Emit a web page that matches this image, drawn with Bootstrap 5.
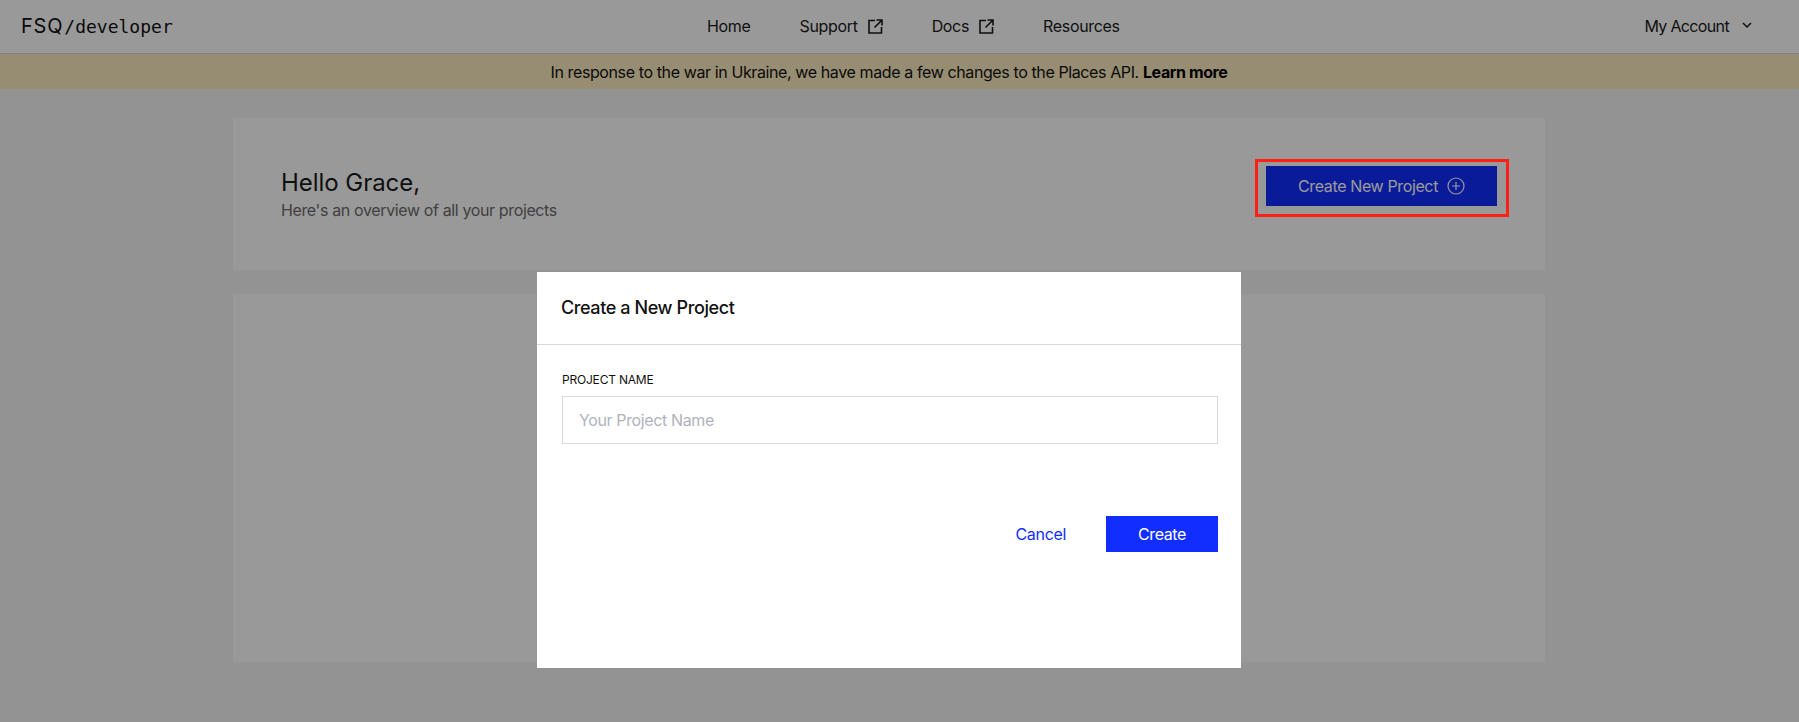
<!doctype html>
<html lang="en"><head><meta charset="utf-8"><title>FSQ developer</title>
<link href="https://cdn.jsdelivr.net/npm/bootstrap@5.3.0/dist/css/bootstrap.min.css" rel="stylesheet">
<style>
html,body{height:100%}
body{font-family:Inter,"Liberation Sans",sans-serif;background:#f5f5f5;color:#1a1a1a;font-size:16px;letter-spacing:-.33px;overflow:hidden}
.topbar{height:54px;background:#fff;border-bottom:1px solid #d9d9d9;padding:0 47px 2px 21px}
.brandslot{width:686px;flex:none}
.brand{font-family:"DejaVu Sans Mono",monospace;font-size:18px;color:#111;letter-spacing:0;text-decoration:none;display:flex;align-items:baseline}
.brand b{font-family:Inter,sans-serif;font-weight:400;font-size:20px;letter-spacing:.8px;margin-right:1px}
.mainnav{gap:49px}
.mainnav a,.acct{color:#1a1a1a;text-decoration:none;font-size:16px}
.mainnav svg{margin-left:10px;vertical-align:-2px}
.acct{gap:13px;margin-left:auto;letter-spacing:-.65px}
.notice{height:35px;background:#fbebc0;color:#111;font-size:16px;padding-right:21px;letter-spacing:-.39px}
.notice a{color:#000;font-weight:700;text-decoration:none}
.pagecol{padding-right:21px}
.pagewrap{width:1312px;margin:29px auto 0}
.panel-top{height:152px;background:#fff;padding:48px 48px 0}
.panel-low{height:368px;background:#fff;margin-top:24px}
.hello{font-size:24px;line-height:34px;letter-spacing:-.05px;margin:0}
.subhello{font-size:16px;color:#6c6c6c;line-height:20px;letter-spacing:-.37px}
.markbox{position:relative}
.markbox::after{content:"";position:absolute;top:-7px;left:-11px;right:-12px;bottom:-11px;border:3px solid #ff1f14;z-index:1060;pointer-events:none}
.btn-fsq{background:#112eff;color:#fff;border:0;border-radius:0;font-size:16px;letter-spacing:-.37px;height:40px;width:231px;padding:0;display:flex;align-items:center;justify-content:center;gap:9px}
.btn-fsq:hover{background:#112eff;color:#fff}
.veil.modal-backdrop{--bs-backdrop-opacity:.4}
.modal.modalroom{padding-right:21px}
.sheet{max-width:704px;width:704px;margin:272px auto 0}
.sheet .modal-content{border:0;border-radius:0;height:396px}
.sheet .modal-header{height:73px;padding:0 24px 2px;border-bottom:1px solid #d9d9d9;border-radius:0}
.sheet .modal-title{font-size:18px;font-weight:500;color:#111;letter-spacing:-.4px}
.sheet .modal-body{padding:27px 23px 0 25px;flex:none}
.fieldlabel{font-size:12px;line-height:16px;color:#111;margin:0 0 8px;display:block;letter-spacing:-.2px}
.sheet .form-control{height:48px;border:1px solid #d9d9d9;border-radius:0;font-size:16px;padding:0 16px;letter-spacing:-.37px}
.sheet .form-control::placeholder{color:#b0b3bd}
.actionrow{margin-top:72px;gap:40px}
.canceltxt{color:#112eff;text-decoration:none}
.btn-make{width:112px;height:36px}
</style></head>
<body>
<nav class="topbar d-flex align-items-center">
  <div class="brandslot"><a class="brand" href="#"><b>FSQ</b>/developer</a></div>
  <div class="mainnav d-flex align-items-center">
    <a href="#">Home</a>
    <a href="#">Support<svg width="15" height="15" viewBox="0 0 15 15" fill="none" stroke="#1a1a1a" stroke-width="1.6"><path d="M7 1.500H1v12.500h12.500V8M8.500 1H14v5.500M14 1 6.500 8.500"/></svg></a>
    <a href="#">Docs<svg width="15" height="15" viewBox="0 0 15 15" fill="none" stroke="#1a1a1a" stroke-width="1.6"><path d="M7 1.500H1v12.500h12.500V8M8.500 1H14v5.500M14 1 6.500 8.500"/></svg></a>
    <a href="#">Resources</a>
  </div>
  <span class="acct d-flex align-items-center">My Account<svg width="10" height="7" viewBox="0 0 10 7" fill="none" stroke="#1a1a1a" stroke-width="1.5"><path d="M1 1l4 4 4-4"/></svg></span>
</nav>
<div class="notice d-flex align-items-center justify-content-center"><span>In response to the war in Ukraine, we have made a few changes to the Places API. <a href="#">Learn more</a></span></div>
<div class="pagecol">
<main class="pagewrap">
  <section class="panel-top d-flex align-items-start justify-content-between">
    <div><h1 class="hello fw-normal">Hello Grace,</h1><div class="subhello">Here's an overview of all your projects</div></div>
    <div class="markbox"><button class="btn btn-fsq" type="button">Create New Project<svg width="18" height="18" viewBox="0 0 18 18" fill="none" stroke="#fff" stroke-width="1.2"><circle cx="9" cy="9" r="8"/><path d="M9 5v8M5 9h8"/></svg></button></div>
  </section>
  <section class="panel-low"></section>
</main>
</div>
<div class="modal-backdrop show veil"></div>
<div class="modal d-block modalroom">
  <div class="modal-dialog sheet">
    <div class="modal-content">
      <div class="modal-header"><h5 class="modal-title">Create a New Project</h5></div>
      <div class="modal-body">
        <label class="fieldlabel" for="pn">PROJECT NAME</label>
        <input id="pn" class="form-control" placeholder="Your Project Name">
        <div class="actionrow d-flex justify-content-end align-items-center">
          <a class="canceltxt" href="#">Cancel</a>
          <button class="btn btn-fsq btn-make" type="button">Create</button>
        </div>
      </div>
    </div>
  </div>
</div>
<script src="https://cdn.jsdelivr.net/npm/bootstrap@5.3.0/dist/js/bootstrap.bundle.min.js"></script>
</body></html>
